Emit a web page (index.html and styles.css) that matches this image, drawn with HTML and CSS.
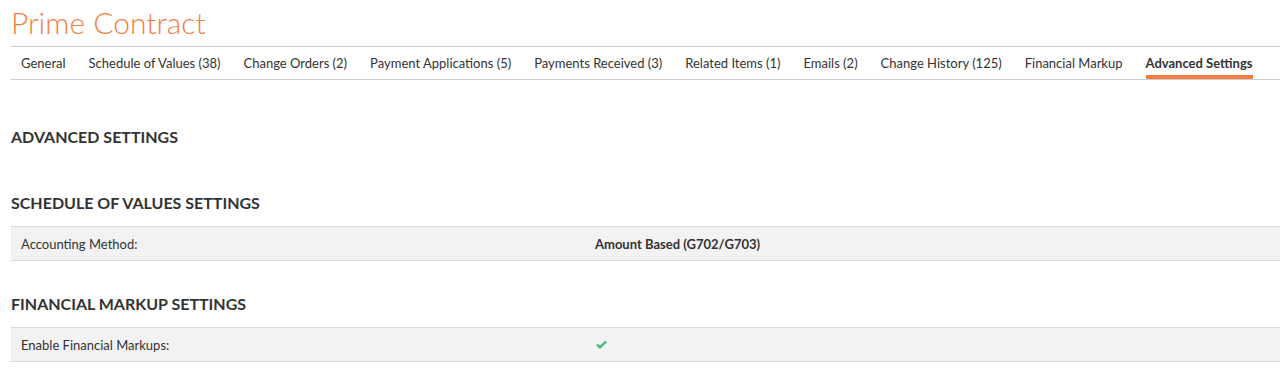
FILE: index.html
```html
<!DOCTYPE html>
<html>
<head>
<meta charset="utf-8">
<link rel="stylesheet" href="styles.css">
</head>
<body>
<div class="page">
  <h1 class="title">Prime Contract</h1>
  <nav class="tabs">
    <a class="tab">General</a>
    <a class="tab">Schedule of Values (38)</a>
    <a class="tab">Change Orders (2)</a>
    <a class="tab">Payment Applications (5)</a>
    <a class="tab">Payments Received (3)</a>
    <a class="tab">Related Items (1)</a>
    <a class="tab">Emails (2)</a>
    <a class="tab">Change History (125)</a>
    <a class="tab">Financial Markup</a>
    <a class="tab active">Advanced Settings</a>
  </nav>
  <h2 class="page-heading">ADVANCED SETTINGS</h2>
  <section class="section">
    <h3 class="section-heading">SCHEDULE OF VALUES SETTINGS</h3>
    <div class="row">
      <div class="label">Accounting Method:</div>
      <div class="value">Amount Based (G702/G703)</div>
    </div>
  </section>
  <section class="section">
    <h3 class="section-heading">FINANCIAL MARKUP SETTINGS</h3>
    <div class="row">
      <div class="label">Enable Financial Markups:</div>
      <div class="value">
        <svg class="check" width="11" height="9" viewBox="0 0 11 9"><path d="M1 4.6 L4 7.4 L10 1.4" fill="none" stroke="#3dbd7d" stroke-width="2.2"/></svg>
      </div>
    </div>
  </section>
</div>
</body>
</html>
```

FILE: styles.css
```css
html, body {
  margin: 0;
  padding: 0;
  background: #fff;
}
body {
  font-family: Lato, "Open Sans", sans-serif;
  color: #333;
}
.page {
  padding-left: 11px;
}
.title {
  margin: 0;
  padding-top: 3px;
  height: 43px;
  font-size: 30px;
  font-weight: 300;
  line-height: 38px;
  color: #f47e42;
}
.tabs {
  display: flex;
  border-top: 1px solid #cfcfcf;
  border-bottom: 1px solid #cfcfcf;
  height: 32px;
  padding-left: 10px;
  gap: 23px;
}
.tab {
  display: block;
  font-size: 13px;
  line-height: 32px;
  color: #333;
  position: relative;
  white-space: nowrap;
}
.tab.active {
  font-weight: bold;
}
.tab.active::after {
  content: "";
  position: absolute;
  left: 0;
  right: 0;
  bottom: 0;
  height: 4px;
  background: #f47e42;
}
.page-heading {
  margin: 0;
  padding-top: 47px;
  font-size: 16px;
  font-weight: bold;
  line-height: 20px;
  color: #333;
}
.section {
  margin-top: 46px;
}
.section + .section {
  margin-top: 33px;
}
.section-heading {
  margin: 0;
  font-size: 16px;
  font-weight: bold;
  line-height: 20px;
  color: #333;
}
.row {
  display: flex;
  margin-top: 13px;
  height: 33px;
  background: #f2f2f2;
  border-top: 1px solid #d9d9d9;
  border-bottom: 1px solid #d9d9d9;
  align-items: center;
  font-size: 13px;
}
.label {
  width: 574px;
  padding-left: 10px;
}
.value {
  font-weight: bold;
  display: flex;
  align-items: center;
}
.check {
  display: block;
  margin-left: 1px;
}
```
